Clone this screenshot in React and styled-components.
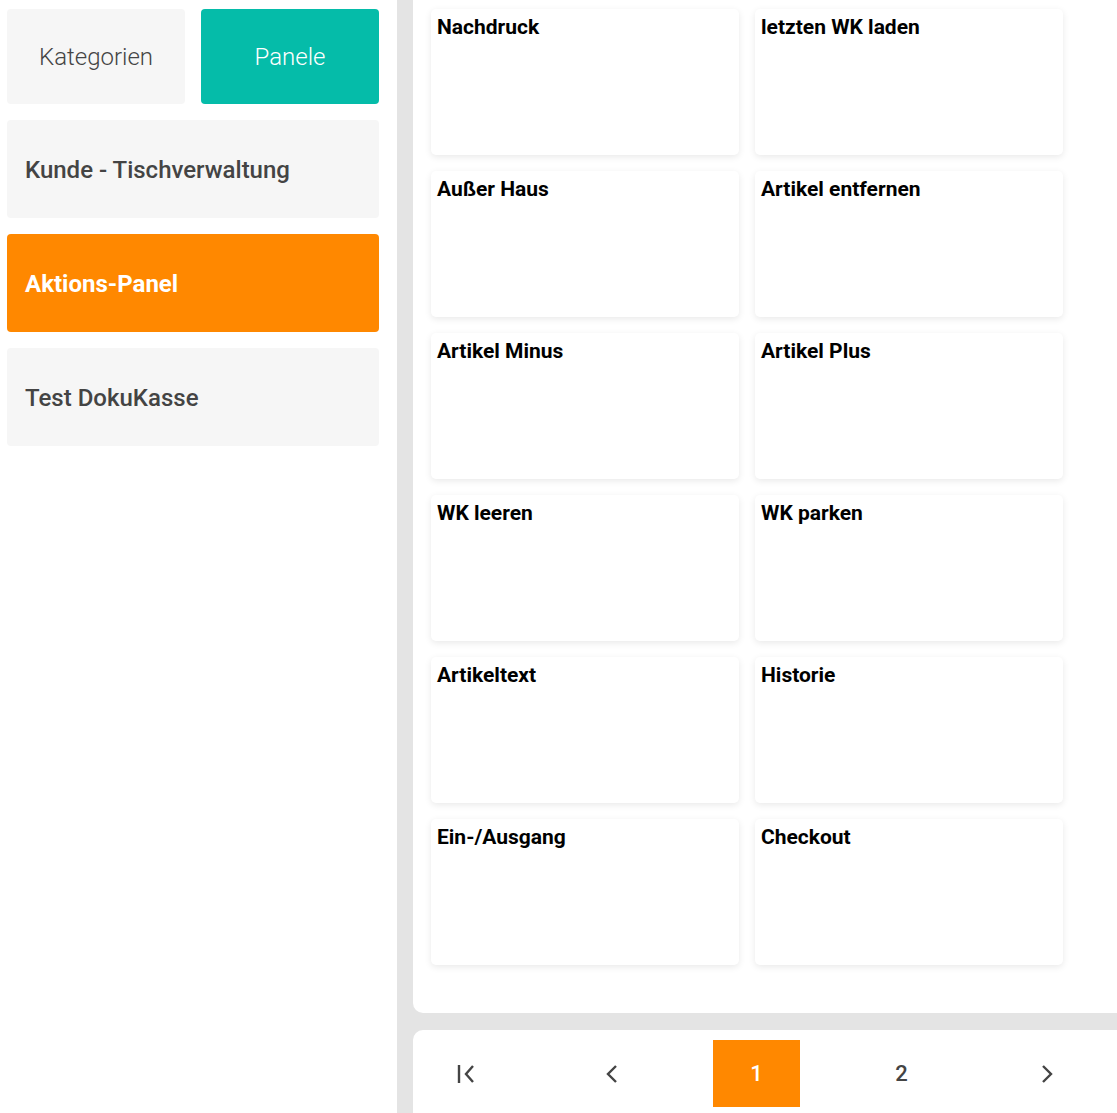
import styled, { createGlobalStyle } from 'styled-components'

const GlobalStyle = createGlobalStyle`
  html, body {
    margin: 0;
    padding: 0;
    height: 100%;
    overflow: hidden;
    font-family: Roboto, "Liberation Sans", sans-serif;
  }
  #root {
    height: 100%;
  }
`

const Layout = styled.div`
  display: flex;
  height: 100vh;
  background: #e4e4e4;
  gap: 16px;
`

const Sidebar = styled.aside`
  width: 397px;
  flex-shrink: 0;
  background: #fff;
  box-sizing: border-box;
  padding: 9px 18px 0 7px;
  display: flex;
  flex-direction: column;
  gap: 16px;
`

const Tabs = styled.div`
  display: grid;
  grid-template-columns: 1fr 1fr;
  gap: 16px;
`

const Tab = styled.button`
  height: 95px;
  border: none;
  border-radius: 4px;
  font-family: Roboto, "Liberation Sans", sans-serif;
  font-weight: 300;
  font-size: 24px;
  cursor: pointer;
  background: ${({ $active }) => ($active ? '#05bca9' : '#f6f6f6')};
  color: ${({ $active }) => ($active ? '#fff' : '#444')};
`

const NavItem = styled.div`
  height: 98px;
  border-radius: 4px;
  display: flex;
  align-items: center;
  padding-left: 18px;
  padding-top: 1px;
  box-sizing: border-box;
  font-size: 24px;
  font-weight: ${({ $active }) => ($active ? 700 : 500)};
  background: ${({ $active }) => ($active ? '#ff8800' : '#f6f6f6')};
  color: ${({ $active }) => ($active ? '#fff' : '#444')};
  cursor: pointer;
`

const Main = styled.main`
  flex: 1;
  display: flex;
  flex-direction: column;
  gap: 17px;
  min-width: 0;
`

const Content = styled.section`
  flex: 1;
  background: #fff;
  border-bottom-left-radius: 10px;
  padding: 9px 18px 0 18px;
`

const Grid = styled.div`
  display: grid;
  grid-template-columns: repeat(2, 308px);
  grid-auto-rows: 146px;
  gap: 16px;
`

const Tile = styled.div`
  background: #fff;
  border-radius: 5px;
  box-shadow: 0 2px 7px rgba(0, 0, 0, 0.09);
  padding: 6px 6px;
  font-size: 21px;
  font-weight: 700;
  color: #000;
  cursor: pointer;
`

const Pagination = styled.nav`
  height: 83px;
  flex-shrink: 0;
  background: #fff;
  border-top-left-radius: 10px;
  box-sizing: border-box;
  padding: 10px 0 0 10px;
  display: flex;
  gap: 58px;
`

const PageButton = styled.button`
  width: 87px;
  height: 67px;
  border: none;
  padding: 0;
  display: flex;
  align-items: center;
  justify-content: center;
  font-family: Roboto, "Liberation Sans", sans-serif;
  font-size: 22px;
  font-weight: 500;
  background: ${({ $active }) => ($active ? '#ff8800' : 'transparent')};
  color: ${({ $active }) => ($active ? '#fff' : '#444')};
  cursor: pointer;
`

const Chevron = ({ dir = 'left', bar = false }) => (
  <svg width="22" height="20" viewBox="0 0 22 20" fill="none" stroke="#444" strokeWidth="2.4">
    {bar && <line x1="3" y1="1" x2="3" y2="19" />}
    {dir === 'left' ? (
      <polyline points={bar ? '17,2 10,10 17,18' : '15,2 7,10 15,18'} strokeLinejoin="miter" />
    ) : (
      <polyline points="7,2 15,10 7,18" strokeLinejoin="miter" />
    )}
  </svg>
)

const actions = [
  'Nachdruck',
  'letzten WK laden',
  'Außer Haus',
  'Artikel entfernen',
  'Artikel Minus',
  'Artikel Plus',
  'WK leeren',
  'WK parken',
  'Artikeltext',
  'Historie',
  'Ein-/Ausgang',
  'Checkout',
]

const panels = ['Kunde - Tischverwaltung', 'Aktions-Panel', 'Test DokuKasse']

export default function App() {
  return (
    <>
      <GlobalStyle />
      <Layout>
        <Sidebar>
          <Tabs>
            <Tab>Kategorien</Tab>
            <Tab $active>Panele</Tab>
          </Tabs>
          {panels.map((p) => (
            <NavItem key={p} $active={p === 'Aktions-Panel'}>
              {p}
            </NavItem>
          ))}
        </Sidebar>
        <Main>
          <Content>
            <Grid>
              {actions.map((a) => (
                <Tile key={a}>{a}</Tile>
              ))}
            </Grid>
          </Content>
          <Pagination>
            <PageButton aria-label="Erste Seite">
              <Chevron bar />
            </PageButton>
            <PageButton aria-label="Zurück">
              <Chevron />
            </PageButton>
            <PageButton $active>1</PageButton>
            <PageButton>2</PageButton>
            <PageButton aria-label="Weiter">
              <Chevron dir="right" />
            </PageButton>
          </Pagination>
        </Main>
      </Layout>
    </>
  )
}
